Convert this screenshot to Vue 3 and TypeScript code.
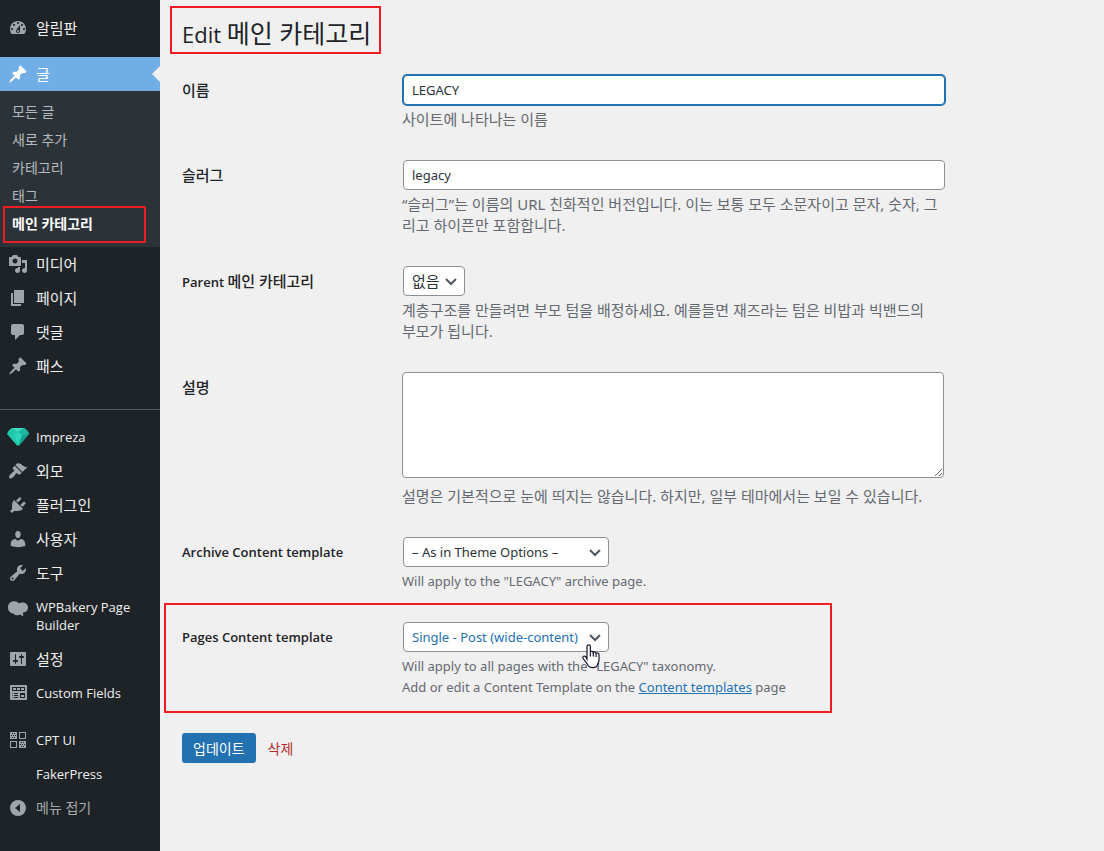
<script setup lang="ts">
import { ref } from 'vue'

interface MenuItem {
  label: string
  icon?: string
  ko?: boolean
}

const icons: Record<string, string> = {
  dashboard:
    'M3.76 16h12.48c1.1-1.37 1.76-3.11 1.76-5 0-4.42-3.58-8-8-8s-8 3.58-8 8c0 1.89.66 3.63 1.76 5zM10 4c.55 0 1 .45 1 1s-.45 1-1 1-1-.45-1-1 .45-1 1-1zM6 6c.55 0 1 .45 1 1s-.45 1-1 1-1-.45-1-1 .45-1 1-1zm8 0c.55 0 1 .45 1 1s-.45 1-1 1-1-.45-1-1 .45-1 1-1zm-5.37 5.55L12 7v6c0 1.1-.9 2-2 2s-2-.9-2-2c0-.57.24-1.08.63-1.45zM4 10c.55 0 1 .45 1 1s-.45 1-1 1-1-.45-1-1 .45-1 1-1zm12 0c.55 0 1 .45 1 1s-.45 1-1 1-1-.45-1-1 .45-1 1-1zm-5 3c0-.55-.45-1-1-1s-1 .45-1 1 .45 1 1 1 1-.45 1-1z',
  pin: 'M10.44 3.02l1.82-1.82 6.36 6.35-1.83 1.82c-1.05-.68-2.48-.57-3.41.36l-.75.75c-.92.93-1.04 2.35-.35 3.41l-1.83 1.82-2.41-2.41-2.8 2.79c-.42.42-3.38 2.71-3.8 2.29s1.86-3.39 2.28-3.81l2.79-2.79L4.1 9.36l1.83-1.82c1.05.69 2.48.57 3.4-.36l.75-.75c.93-.92 1.05-2.35.36-3.41z',
  media:
    'M13 11V4c0-.55-.45-1-1-1h-1.67L9 1H5L3.67 3H2c-.55 0-1 .45-1 1v7c0 .55.45 1 1 1h10c.55 0 1-.45 1-1zM7 4.5c1.38 0 2.5 1.12 2.5 2.5S8.38 9.5 7 9.5 4.5 8.38 4.5 7 5.62 4.5 7 4.5zM14 6h5v10.5c0 1.38-1.12 2.5-2.5 2.5S14 17.88 14 16.5s1.12-2.5 2.5-2.5c.17 0 .34.02.5.05V9h-3V6zm-4 8.05V13h2v3.5c0 1.38-1.12 2.5-2.5 2.5S7 17.88 7 16.5 8.12 14 9.5 14c.17 0 .34.02.5.05z',
  page: 'M6 15V2h10v13H6zm-1 1h8v2H3V5h2v11z',
  comment: 'M5 2h9c1.1 0 2 .9 2 2v7c0 1.1-.9 2-2 2h-2l-5 5v-5H5c-1.1 0-2-.9-2-2V4c0-1.1.9-2 2-2z',
  brush:
    'M14.48 11.06L7.41 3.99l1.5-1.5c.5-.56 2.3-.47 3.51.32 1.21.8 1.43 1.28 2.91 2.1 1.18.64 2.45 1.26 4.45.85zm-.71.71L6.7 4.7 4.93 6.47c-.39.39-.39 1.02 0 1.41l1.06 1.06c.39.39.39 1.03 0 1.42-.6.6-1.43 1.11-2.21 1.69-.35.26-.7.53-1.01.84C1.43 14.23.4 16.08 1.4 17.07c.99 1 2.84-.03 4.18-1.36.31-.31.58-.66.85-1.02.57-.78 1.08-1.61 1.69-2.21.39-.39 1.02-.39 1.41 0l1.06 1.06c.39.39 1.02.39 1.41 0z',
  plug: 'M13.11 4.36L9.87 7.6 8 5.73l3.24-3.24c.35-.34 1.05-.2 1.56.32.52.51.66 1.21.31 1.55zm-8 1.77l.91-1.12 9.01 9.01-1.19.84c-.71.71-2.63 1.16-3.82 1.16H6.14L4.9 17.26c-.59.59-1.54.59-2.12 0-.59-.58-.59-1.53 0-2.12l1.24-1.24v-3.88c0-1.13.4-3.19 1.09-3.89zm7.26 3.97l3.24-3.24c.34-.35 1.04-.21 1.55.31.52.51.66 1.21.31 1.55l-3.24 3.25z',
  user: 'M10 9.25c-2.27 0-2.73-3.44-2.73-3.44C7 4.02 7.82 2 9.97 2c2.16 0 2.98 2.02 2.71 3.81 0 0-.41 3.44-2.68 3.44zm0 2.57L12.72 10c2.39 0 4.52 2.33 4.52 4.53v2.49s-3.65 1.13-7.24 1.13c-3.65 0-7.24-1.13-7.24-1.13v-2.49c0-2.25 1.94-4.48 4.47-4.48z',
  wrench:
    'M16.68 9.77c-1.34 1.34-3.3 1.67-4.95.99l-5.41 6.52c-.99.99-2.59.99-3.58 0s-.99-2.59 0-3.57l6.52-5.42c-.68-1.65-.35-3.61.99-4.95 1.28-1.28 3.12-1.62 4.72-1.06l-2.89 2.89 2.82 2.82 2.86-2.87c.53 1.58.18 3.39-1.08 4.65zM3.81 16.21c.4.39 1.04.39 1.43 0 .4-.4.4-1.04 0-1.43-.39-.4-1.03-.4-1.43 0-.39.39-.39 1.03 0 1.43z',
  bakery:
    'M0 10.2C0 6.6 2.8 4.3 6.2 4.3c2.2 0 3.8.8 4.8 2.2 1-.9 2.100-1.100 3.500-1.100 3.300 0 5.500 2.200 5.500 5.100 0 2.800-1.900 4.800-4.700 5-.3 0-.5.3-.4.7l.4 2.600c0 .5-.5.6-.9.3l-2.100-1.700c-.8.5-2.100.9-3.300.9-1.500 0-2.600-.5-3.100-1.600C2.300 16.300 0 13.800 0 10.200z',
  sliders:
    'M18 16V4c0-.55-.45-1-1-1H3c-.55 0-1 .45-1 1v12c0 .55.45 1 1 1h14c.55 0 1-.45 1-1zM8 11h1c.55 0 1 .45 1 1s-.45 1-1 1H8v1.5c0 .28-.22.5-.5.5s-.5-.22-.5-.5V13H6c-.55 0-1-.45-1-1s.45-1 1-1h1V5.5c0-.28.22-.5.5-.5s.5.22.5.5V11zm5-2h-1c-.55 0-1-.45-1-1s.45-1 1-1h1V5.5c0-.28.22-.5.5-.5s.5.22.5.5V7h1c.55 0 1 .45 1 1s-.45 1-1 1h-1v5.5c0 .28-.22.5-.5.5s-.5-.22-.5-.5V9z',
  fields:
    'M19 16V3c0-.55-.45-1-1-1H3c-.55 0-1 .45-1 1v13c0 .55.45 1 1 1h15c.55 0 1-.45 1-1zM4 4h13v4H4V4zm1 1v2h3V5H5zm4 0v2h3V5H9zm4 0v2h3V5h-3zm-8.5 5c.28 0 .5.22.5.5s-.22.5-.5.5-.5-.22-.5-.5.22-.5.5-.5zM6 10h4v1H6v-1zm6 0h5v5h-5v-5zm-7.5 2c.28 0 .5.22.5.5s-.22.5-.5.5-.5-.22-.5-.5.22-.5.5-.5zM6 12h4v1H6v-1zm7 0v2h3v-2h-3zm-8.5 2c.28 0 .5.22.5.5s-.22.5-.5.5-.5-.22-.5-.5.22-.5.5-.5zM6 14h4v1H6v-1z',
  types:
    'M2 2h7v7H2zM4 3v1h1V3zM6 3v1h1V3zM3 5v1h1V5zM5 5v1h1V5zM7 5v1h1V5zM4 7v1h1V7zM6 7v1h1V7zM11 2h7v7h-7zm1 1v5h5V3zM2 11h7v7H2zm1 1v5h5v-5zM11 11h7v7h-7zM13 12v1h1v-1zM15 12v1h1v-1zM12 14v1h1v-1zM14 14v1h1v-1zM16 14v1h1v-1zM13 16v1h1v-1zM15 16v1h1v-1z',
  collapse: 'M10 2a8 8 0 1 0 0 16 8 8 0 0 0 0-16zm2 4v8l-5-4z',
}

const submenu = ['모든 글', '새로 추가', '카테고리', '태그', '메인 카테고리']

const contentMenu: MenuItem[] = [
  { label: '미디어', icon: 'media', ko: true },
  { label: '페이지', icon: 'page', ko: true },
  { label: '댓글', icon: 'comment', ko: true },
  { label: '패스', icon: 'pin', ko: true },
]

const adminMenu: MenuItem[] = [
  { label: 'Impreza', icon: 'gem' },
  { label: '외모', icon: 'brush', ko: true },
  { label: '플러그인', icon: 'plug', ko: true },
  { label: '사용자', icon: 'user', ko: true },
  { label: '도구', icon: 'wrench', ko: true },
  { label: 'WPBakery Page Builder', icon: 'bakery' },
  { label: '설정', icon: 'sliders', ko: true },
  { label: 'Custom Fields', icon: 'fields' },
]

const extraMenu: MenuItem[] = [
  { label: 'CPT UI', icon: 'types' },
  { label: 'FakerPress' },
]

const groups = [
  { name: 'group-content', items: contentMenu },
  { name: 'group-admin', items: adminMenu },
  { name: 'group-extra', items: extraMenu },
]

const templates = ['– As in Theme Options –', 'Single - Post (wide-content)']

const name = ref('LEGACY')
const slug = ref('legacy')
const parent = ref('없음')
const description = ref('')
const archiveTemplate = ref(templates[0])
const pagesTemplate = ref(templates[1])
</script>

<template>
  <div class="page">
    <nav class="sidebar">
      <a class="item ko" href="#">
        <svg class="icon" viewBox="0 0 20 20"><path :d="icons.dashboard" /></svg>
        <span>알림판</span>
      </a>
      <a class="item ko current" href="#">
        <svg class="icon" viewBox="0 0 20 20"><path :d="icons.pin" /></svg>
        <span>글</span>
      </a>
      <ul class="submenu">
        <li v-for="(entry, i) in submenu" :key="entry">
          <a href="#" :class="{ selected: i === submenu.length - 1 }">{{ entry }}</a>
        </li>
      </ul>
      <div v-for="group in groups" :key="group.name" :class="group.name">
        <a v-for="item in group.items" :key="item.label" class="item" :class="{ ko: item.ko }" href="#">
          <svg v-if="item.icon === 'gem'" class="gem" viewBox="0 0 22 18">
            <path d="M5 0h12c2 1 4 3 5 6L12 17.500h-2L0 6c1-3 3-5 5-6z" fill="#1fc8ab" />
            <path d="M5 0h12l-6 4z" fill="#3fdcc3" />
            <path d="M17 0c2 1 4 3 5 6l-7 1-4-3z" fill="#1bb79e" />
            <path d="M7 7l4-3 4 3-4 10.500z" fill="#2ad6ba" />
            <path d="M15 7l7-1-10 11.500h-1z" fill="#14a58d" />
          </svg>
          <svg v-else-if="item.icon" class="icon" viewBox="0 0 20 20">
            <path :d="icons[item.icon]" fill-rule="evenodd" />
          </svg>
          <span v-else class="icon"></span>
          <span>{{ item.label }}</span>
        </a>
      </div>
      <button class="item collapse" type="button">
        <svg class="icon" viewBox="0 0 20 20"><path :d="icons.collapse" fill-rule="evenodd" /></svg>
        <span>메뉴 접기</span>
      </button>
    </nav>

    <main class="content">
      <h1>Edit <span>메인 카테고리</span></h1>
      <form @submit.prevent>
        <div class="row">
          <label for="name"><span class="ko">이름</span></label>
          <div class="field">
            <input id="name" v-model="name" class="active" type="text" />
            <p class="ko">사이트에 나타나는 이름</p>
          </div>
        </div>
        <div class="row">
          <label for="slug"><span class="ko">슬러그</span></label>
          <div class="field">
            <input id="slug" v-model="slug" type="text" />
            <p class="ko">
              “슬러그”는 이름의 URL 친화적인 버전입니다. 이는 보통 모두 소문자이고 문자, 숫자, 그리고 하이픈만 포함합니다.
            </p>
          </div>
        </div>
        <div class="row">
          <label for="parent">Parent <span class="ko">메인 카테고리</span></label>
          <div class="field">
            <div class="select">
              <select id="parent" v-model="parent" class="ko">
                <option>없음</option>
              </select>
              <svg class="chevron" viewBox="0 0 12 8"><path d="M1 1l5 5 5-5" /></svg>
            </div>
            <p class="ko">계층구조를 만들려면 부모 텀을 배정하세요. 예를들면 재즈라는 텀은 비밥과 빅밴드의 부모가 됩니다.</p>
          </div>
        </div>
        <div class="row">
          <label for="description"><span class="ko">설명</span></label>
          <div class="field">
            <textarea id="description" v-model="description"></textarea>
            <p class="ko">설명은 기본적으로 눈에 띄지는 않습니다. 하지만, 일부 테마에서는 보일 수 있습니다.</p>
          </div>
        </div>
        <div class="row">
          <label for="archive">Archive Content template</label>
          <div class="field">
            <div class="select">
              <select id="archive" v-model="archiveTemplate" class="template">
                <option v-for="t in templates" :key="t">{{ t }}</option>
              </select>
              <svg class="chevron" viewBox="0 0 12 8"><path d="M1 1l5 5 5-5" /></svg>
            </div>
            <p>Will apply to the "LEGACY" archive page.</p>
          </div>
        </div>
        <div class="row marked">
          <label for="pages">Pages Content template</label>
          <div class="field">
            <div class="select">
              <select id="pages" v-model="pagesTemplate" class="template hovered">
                <option v-for="t in templates" :key="t">{{ t }}</option>
              </select>
              <svg class="chevron" viewBox="0 0 12 8"><path d="M1 1l5 5 5-5" /></svg>
              <svg class="pointer" viewBox="0 0 18 25">
                <path
                  d="M5 15V2.500a1.700 1.700 0 0 1 3.400 0V8c.4-1 2.600-.9 2.900.5.500-.9 2.500-.7 2.800.7.700-.7 2.900-.4 2.900 1.500V16c0 2-1.500 3.500-1.700 5.500-1 2.500-6.800 3-8.800.5C5.500 19.500 2.500 17 1 14c-.6-1.500 1.400-2.700 2.600-1.300z"
                />
                <path d="M8.400 7v5.500M11.300 8.500v4M14.100 9.500v3.500" />
              </svg>
            </div>
            <p>
              Will apply to all pages with the "LEGACY" taxonomy.<br />
              Add or edit a Content Template on the <a href="#">Content templates</a> page
            </p>
          </div>
        </div>
        <div class="actions">
          <button class="submit" type="submit">업데이트</button>
          <a class="delete" href="#">삭제</a>
        </div>
      </form>
    </main>
  </div>
</template>

<style>
body {
  background: #f0f0f0;
}
</style>

<style scoped>
.page {
  display: flex;
  min-height: 100vh;
  font-family: 'Open Sans', 'Noto Sans CJK KR', sans-serif;
  font-size: 13px;
  line-height: 21px;
  color: #1d2327;
}

.page *,
.page *::before,
.page *::after {
  box-sizing: border-box;
}

.ko {
  font-size: 15px;
}

/* Sidebar */
.sidebar {
  flex: 0 0 160px;
  padding: 11px 0 24px;
  background: #1d2327;
}

.item {
  position: relative;
  display: flex;
  align-items: flex-start;
  gap: 8px;
  width: 100%;
  padding: 8px 16px 8px 8px;
  color: #f0f0f1;
  line-height: 18px;
  text-decoration: none;
}

.icon {
  flex: none;
  width: 20px;
  height: 20px;
  margin: -1px 0;
  fill: #a0a5aa;
}

.gem {
  flex: none;
  width: 22px;
  height: 18px;
  margin: 0 -1px;
}

.current {
  margin-top: 12px;
  background: #72aee6;
  color: #fff;
}

.current .icon {
  fill: #fff;
}

.current::after {
  content: '';
  position: absolute;
  top: 9px;
  right: 0;
  border: 8px solid transparent;
  border-left-width: 0;
  border-right-color: #f0f0f0;
}

.submenu {
  margin: 0;
  padding: 7px 0 9px;
  list-style: none;
  background: #2c3338;
  font-size: 14px;
}

.submenu a {
  position: relative;
  display: block;
  padding: 4px 12px;
  line-height: 20px;
  color: #b5babf;
  text-decoration: none;
}

.submenu .selected {
  color: #fff;
  font-weight: 600;
}

.submenu .selected::after,
h1::after,
.marked::after {
  content: '';
  position: absolute;
  border: 2px solid #ed1c24;
  pointer-events: none;
}

.submenu .selected::after {
  inset: -4px 14px -5px 3px;
}

.group-admin {
  margin-top: 26px;
  padding-top: 10px;
  border-top: 1px solid #50575e;
}

.group-extra {
  padding-top: 13px;
}

.collapse {
  border: 0;
  background: none;
  color: #a7aaad;
  font-family: inherit;
  font-size: 14px;
  text-align: left;
}

/* Form */
.content {
  flex: 1;
  min-width: 0;
  padding: 6px 22px 40px;
}

h1 {
  position: relative;
  width: fit-content;
  margin: 0 0 21px;
  padding: 11px 0 4px;
  font-size: 22px;
  font-weight: 400;
  line-height: 32px;
}

h1 span {
  font-size: 25px;
}

h1::after {
  inset: 0 -10px 0 -12px;
}

form {
  max-width: 800px;
}

.row {
  position: relative;
  display: grid;
  grid-template-columns: 210px 1fr;
  padding-bottom: 30px;
}

.row > label {
  padding-top: 5px;
  line-height: 20px;
  font-weight: 600;
}

.row > label .ko {
  font-weight: 500;
}

.field {
  padding: 0 10px;
  font-family: 'Noto Sans', 'Noto Sans CJK KR', sans-serif;
}

.field p {
  max-width: 94%;
  margin: 4px 0 0;
  color: #646970;
}

input,
textarea,
select {
  border: 1px solid #8c8f94;
  border-radius: 4px;
  background: #fff;
  color: #2c3338;
  font-family: inherit;
  font-size: 13px;
  outline: none;
}

input,
textarea {
  display: block;
  width: 95%;
  height: 30px;
  padding: 0 8px;
}

input {
  margin-left: 1px;
}

input.active {
  border-color: #2271b1;
  box-shadow: 0 0 0 1px #2271b1;
}

textarea {
  height: 106px;
  resize: vertical;
}

.field textarea + p {
  margin-top: 8px;
}

.select {
  position: relative;
  width: fit-content;
  margin-left: 1px;
}

select {
  display: block;
  height: 30px;
  padding: 0 24px 0 8px;
  appearance: none;
}

select.ko {
  font-size: 15px;
}

select.template {
  min-width: 206px;
}

select.hovered {
  color: #2271b1;
}

.chevron {
  position: absolute;
  top: 12px;
  right: 8px;
  width: 12px;
  height: 8px;
  fill: none;
  stroke: #50575e;
  stroke-width: 2;
  pointer-events: none;
}

.pointer {
  position: absolute;
  top: 22px;
  right: 9px;
  z-index: 1;
  width: 18px;
  height: 25px;
  fill: #fff;
  stroke: #14142a;
  stroke-width: 1.2;
  pointer-events: none;
}

.field a {
  color: #2271b1;
}

.marked::after {
  inset: -19px 150px 15px -18px;
}

.actions {
  display: flex;
  align-items: center;
  gap: 12px;
  padding-top: 5px;
  font-size: 14px;
}

.submit {
  height: 30px;
  padding: 0 11px;
  border: 0;
  border-radius: 3px;
  background: #2271b1;
  color: #fff;
  font-family: inherit;
  font-size: 14px;
}

.delete {
  color: #b32d2e;
  text-decoration: none;
}
</style>
